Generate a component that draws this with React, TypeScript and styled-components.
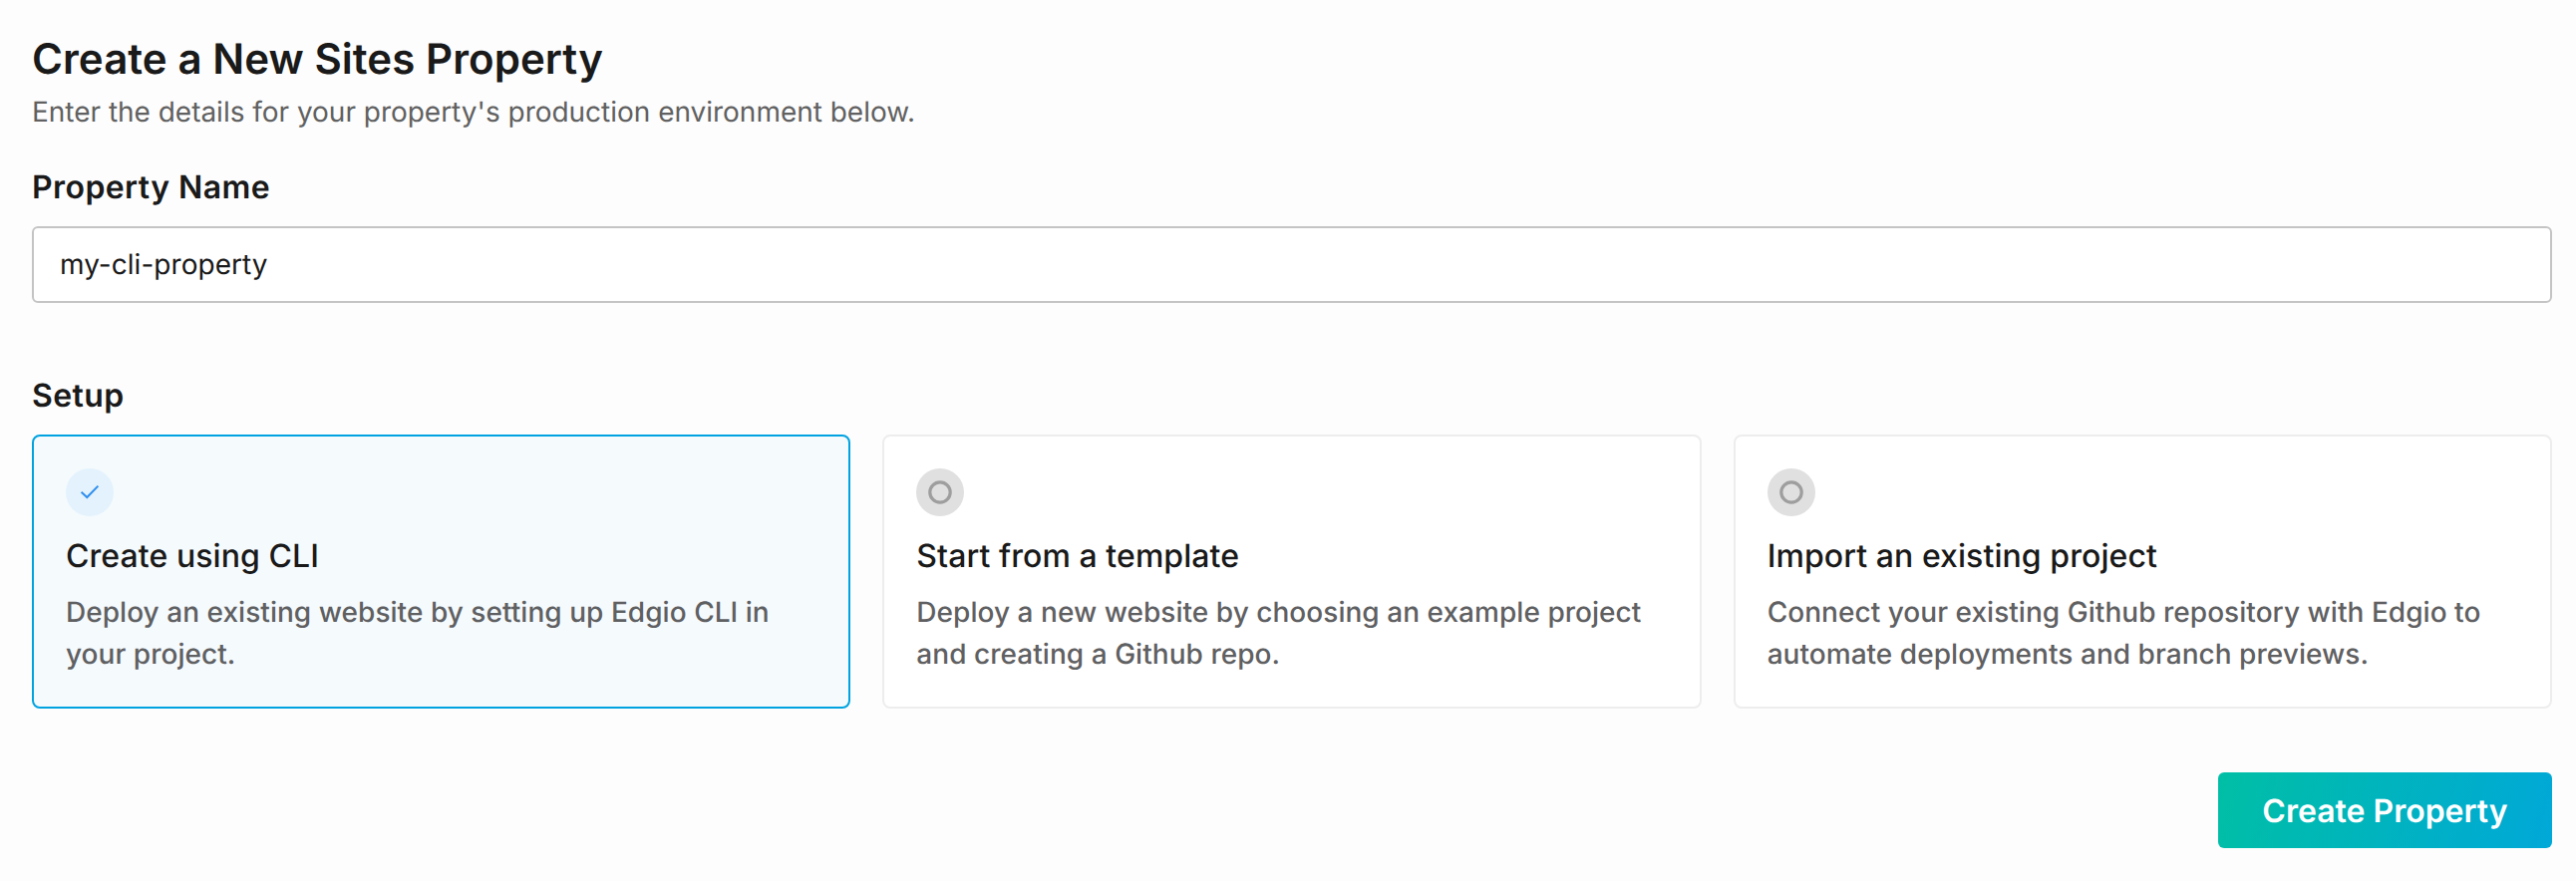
import React, { useState } from 'react';
import styled, { createGlobalStyle } from 'styled-components';

const GlobalStyle = createGlobalStyle`
  *, *::before, *::after { box-sizing: border-box; }
  body {
    margin: 0;
    background: #fdfdfd;
    color: #1a1a1a;
    font-family: Inter, "Liberation Sans", sans-serif;
    text-rendering: geometricPrecision;
  }
`;

const Page = styled.form`
  display: flex;
  flex-direction: column;
  min-height: 884px;
  padding: 34px 24px 32px 32px;
`;

const Title = styled.h1`
  margin: 0;
  font-size: 42px;
  font-weight: 600;
  line-height: 51px;
  letter-spacing: 0.07px;
`;

const Subtitle = styled.p`
  margin: 6px 0 35px;
  color: #616161;
  font-size: 28px;
  line-height: 42px;
  letter-spacing: -0.02px;
`;

const SectionLabel = styled.label`
  margin-bottom: 19px;
  font-size: 32px;
  font-weight: 600;
  line-height: 40px;
  letter-spacing: 0.42px;
`;

const NameInput = styled.input`
  width: 100%;
  height: 77px;
  margin-bottom: 73px;
  padding: 0 26px 1px;
  border: 2px solid #c4c4c4;
  border-radius: 6px;
  outline: none;
  background: #fff;
  color: #1a1a1a;
  font: 400 28px Inter, "Liberation Sans", sans-serif;
  letter-spacing: 0.04px;
  text-rendering: geometricPrecision;
`;

const Options = styled.div`
  display: grid;
  grid-template-columns: repeat(3, 1fr);
  gap: 32px;
`;

const OptionCard = styled.div<{ $selected: boolean }>`
  height: 275px;
  padding: 32px;
  border: 2px solid ${(p) => (p.$selected ? '#00a3e0' : '#ededed')};
  border-radius: 8px;
  background: ${(p) => (p.$selected ? '#f5fafd' : '#fff')};
  cursor: pointer;
`;

const Badge = styled.div<{ $selected: boolean }>`
  display: flex;
  align-items: center;
  justify-content: center;
  width: 48px;
  height: 48px;
  border-radius: 50%;
  background: ${(p) => (p.$selected ? '#e3f2fd' : '#e0e0e0')};
`;

const OptionTitle = styled.h2`
  margin: 20px 0 15px;
  font-size: 32px;
  font-weight: 500;
  line-height: 40px;
  letter-spacing: 0.07px;
`;

const OptionText = styled.p`
  margin: 0;
  color: #5f6062;
  font-size: 28px;
  font-weight: 500;
  line-height: 42px;
  letter-spacing: 0.04px;
`;

const Actions = styled.div`
  display: flex;
  justify-content: flex-end;
  margin-top: 64px;
`;

const SubmitButton = styled.button`
  width: 335px;
  height: 76px;
  padding: 0;
  border: 0;
  border-radius: 6px;
  background: linear-gradient(105deg, #00bfa5 0%, #00a8d8 100%);
  color: #fff;
  font: 600 32px Inter, "Liberation Sans", sans-serif;
  text-rendering: geometricPrecision;
  cursor: pointer;
`;

const CheckIcon = () => (
  <svg width="48" height="48" viewBox="0 0 48 48" fill="none" stroke="#2f8fee" strokeWidth="2">
    <path d="M15.6 23.8L21.3 29L32.4 17.6" />
  </svg>
);

const RingIcon = () => (
  <svg width="48" height="48" viewBox="0 0 48 48" fill="none" stroke="#9e9e9e" strokeWidth="3.2">
    <circle cx="24" cy="24" r="10.2" />
  </svg>
);

const options = [
  {
    title: 'Create using CLI',
    lines: ['Deploy an existing website by setting up Edgio CLI in', 'your project.'],
  },
  {
    title: 'Start from a template',
    lines: ['Deploy a new website by choosing an example project', 'and creating a Github repo.'],
  },
  {
    title: 'Import an existing project',
    lines: ['Connect your existing Github repository with Edgio to', 'automate deployments and branch previews.'],
  },
];

export default function App() {
  const [name, setName] = useState('my-cli-property');
  const [selected, setSelected] = useState(0);

  return (
    <>
      <GlobalStyle />
      <Page onSubmit={(e) => e.preventDefault()}>
        <Title>Create a New Sites Property</Title>
        <Subtitle>Enter the details for your property's production environment below.</Subtitle>
        <SectionLabel htmlFor="property-name">Property Name</SectionLabel>
        <NameInput id="property-name" value={name} spellCheck={false} onChange={(e) => setName(e.target.value)} />
        <SectionLabel as="div">Setup</SectionLabel>
        <Options>
          {options.map((option, i) => (
            <OptionCard key={option.title} $selected={i === selected} onClick={() => setSelected(i)}>
              <Badge $selected={i === selected}>{i === selected ? <CheckIcon /> : <RingIcon />}</Badge>
              <OptionTitle>{option.title}</OptionTitle>
              <OptionText>
                {option.lines[0]}
                <br />
                {option.lines[1]}
              </OptionText>
            </OptionCard>
          ))}
        </Options>
        <Actions>
          <SubmitButton type="submit">Create Property</SubmitButton>
        </Actions>
      </Page>
    </>
  );
}
